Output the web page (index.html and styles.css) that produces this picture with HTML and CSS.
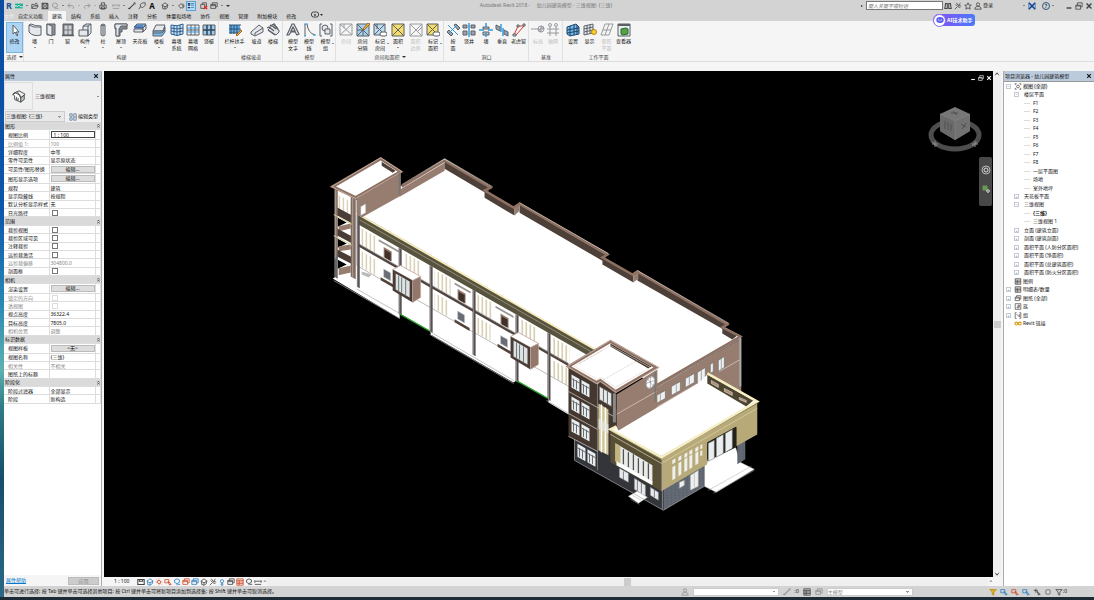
FILE: index.html
```
<!DOCTYPE html>
<html lang="zh-CN">

<head>
	<meta charset="utf-8">
	<meta name="viewport" content="width=device-width, initial-scale=1">
	<title>Autodesk Revit 2018 - 幼儿园建筑模型</title>
	<link rel="stylesheet" href="styles.css">
</head>

<body>
	<svg class="defs" width="0" height="0" aria-hidden="true">
		<!-- small shared glyphs, 10x10 -->
		<symbol id="g-open" viewBox="0 0 10 10"><path d="M1 8V3h3l1 1h3v1M1 8l2-3h6L7 8zM5 2c2-1 3 0 3 1" /></symbol>
		<symbol id="g-save" viewBox="0 0 10 10"><path d="M1.500 1.500h6l1 1v6h-7z" stroke-width="1.400" /><path d="M3 1.500v2.500h4v-2.500M3 8.500v-2.500h4v2.500" /></symbol>
		<symbol id="g-sync" viewBox="0 0 10 10"><path d="M5 1l3 1.500v3L5 7 2 5.500v-3zM5 7v2M6 8h3" /></symbol>
		<symbol id="g-undo" viewBox="0 0 10 10"><path d="M4 2L1 4.500 4 7M1 4.500h6q3 2 0 4" /></symbol>
		<symbol id="g-redo" viewBox="0 0 10 10"><path d="M6 2l3 2.500L6 7M9 4.500H3q-3 2 0 4" /></symbol>
		<symbol id="g-print" viewBox="0 0 10 10"><path d="M3 4V1h4v3M1 4h8v4H1zM3 6h4v3H3z" /></symbol>
		<symbol id="g-measure" viewBox="0 0 10 10"><path d="M1 3v3M9 3v3M1 4h8M1 8h8" /></symbol>
		<symbol id="g-line" viewBox="0 0 10 10"><path d="M1 9l7-7" stroke-width="1.300" /><path d="M0 8h3M7 1h2v2" /></symbol>
		<symbol id="g-tag" viewBox="0 0 10 10"><path d="M1 9l2-3M3 6V3l3-2h3v3L6 7z" /></symbol>
		<symbol id="g-home" viewBox="0 0 10 10"><path d="M1 4l4-3 4 3-4 2zM2 5v3l3 1 3-2V4M5 6v3" /></symbol>
		<symbol id="g-section" viewBox="0 0 10 10"><path d="M5 2l3 3-3 3-3-3zM7 2l2 3-2 3" /></symbol>
		<symbol id="g-views" viewBox="0 0 10 10"><path d="M1 3V1h2M7 1h2v2M9 7v2H7M3 9H1V7" /><circle cx="5" cy="5" r="2" /></symbol>
		<symbol id="g-win" viewBox="0 0 10 10"><path d="M1 3h6v5H1zM3 3V1h6v5H7M1 4.500h6" /></symbol>
		<symbol id="g-people" viewBox="0 0 10 10"><circle cx="5" cy="3" r="2" /><path d="M1 9q0-3 3-3.500h2q3 .5 3 3.500z" /></symbol>
		<symbol id="g-star" viewBox="0 0 10 10"><path d="M5 1l1.200 2.800 3 .2-2.300 2 .8 3L5 7.400 2.300 9l.8-3L.8 4l3-.2z" /></symbol>
		<symbol id="g-find" viewBox="0 0 10 10"><path d="M2 2h2v2h2V2h2l1 6H6V6H4v2H1z" stroke-width="1.300" /></symbol>
		<symbol id="g-key" viewBox="0 0 10 10"><path d="M2 3q3 4 6 4M3 1q1 4 6 4M4 6L1 9M6 4l2-3" /></symbol>
		<symbol id="g-filter" viewBox="0 0 10 10"><path d="M1 2h8L6 5v4L4 8V5z" /></symbol>
		<symbol id="g-cursor" viewBox="0 0 10 10"><path d="M1 2h5v4H1zM5 4l4 4H7v1z" /></symbol>
		<symbol id="g-sun" viewBox="0 0 10 10"><circle cx="5" cy="5" r="2" /><path d="M5 1v1M5 8v1M1 5h1M8 5h1M2 2l1 1M7 7l1 1" /></symbol>
		<symbol id="g-table" viewBox="0 0 10 10"><path d="M1 1h8v8H1zM1 3h8M1 5h8M1 7h8M4 3v6" /></symbol>
		<symbol id="g-restore" viewBox="0 0 10 10"><path d="M1 4h6v5H1zM3 4V1h6v5H7M1 5h6" /></symbol>
		<symbol id="g-close" viewBox="0 0 10 10"><path d="M2 2l6 6M8 2L2 8" stroke-width="1.800" /></symbol>
		<symbol id="g-min" viewBox="0 0 10 10"><path d="M2 7.500h6" stroke-width="1.800" /></symbol>
		<symbol id="g-fold" viewBox="0 0 10 10"><path d="M3 5l2-3 2 3M3 9l2-3 2 3" stroke-width="1.500" /></symbol>
		<symbol id="g-up" viewBox="0 0 10 10"><path d="M2 7l3-4 3 4" stroke-width="1.500" /></symbol>
		<symbol id="g-down" viewBox="0 0 10 10"><path d="M2 3l3 4 3-4" stroke-width="1.500" /></symbol>
	</svg>

	<div class="desktop">
		<div class="app">
			<header class="titlebar">
				<div class="quick">
					<button class="qbtn logo" aria-label="应用程序菜单">R</button>
					<button class="qbtn" aria-label="协作"><svg viewBox="0 0 10 10"><path d="M0 2h10v6H0z" fill="#22b095" stroke="none" /><path d="M1 6V4l2 2 2-2 2 2h3" stroke="#fff" /></svg></button>
					<i class="caret"></i>
					<button class="qbtn" aria-label="打开"><svg><use href="#g-open" /></svg></button>
					<button class="qbtn" aria-label="保存"><svg><use href="#g-save" /></svg></button>
					<button class="qbtn dim" aria-label="同步"><svg><use href="#g-sync" /></svg></button>
					<i class="caret"></i>
					<button class="qbtn dim" aria-label="放弃"><svg><use href="#g-undo" /></svg></button>
					<i class="caret dim"></i>
					<button class="qbtn dim" aria-label="重做"><svg><use href="#g-redo" /></svg></button>
					<i class="caret dim"></i>
					<button class="qbtn" aria-label="打印"><svg><use href="#g-print" /></svg></button>
					<i class="sep"></i>
					<button class="qbtn dim" aria-label="测量"><svg><use href="#g-measure" /></svg></button>
					<i class="caret"></i>
					<button class="qbtn" aria-label="对齐尺寸标注"><svg><use href="#g-line" /></svg></button>
					<button class="qbtn" aria-label="按类别标记"><svg><use href="#g-tag" /></svg></button>
					<button class="qbtn letter" aria-label="文字">A</button>
					<i class="sep"></i>
					<button class="qbtn" aria-label="默认三维视图"><svg><use href="#g-home" /></svg></button>
					<i class="caret"></i>
					<button class="qbtn" aria-label="剖面"><svg><use href="#g-section" /></svg></button>
					<button class="qbtn on" aria-label="细线"><svg viewBox="0 0 10 10"><path d="M1 2h3M1 4h3M1 7h3" stroke="#235" stroke-width="1.500" /><path d="M5 2h4M5 4h4M5 7h4" stroke="#37a" /></svg></button>
					<i class="sep"></i>
					<button class="qbtn" aria-label="关闭隐藏窗口"><svg viewBox="0 0 10 10"><path d="M1 3h5v5H1zM3 3V1h5v4" /><path d="M5 5l4 4M9 5L5 9" stroke="#d22" stroke-width="1.500" /></svg></button>
					<button class="qbtn" aria-label="切换窗口"><svg><use href="#g-win" /></svg></button>
					<i class="caret"></i>
					<i class="caret big"></i>
				</div>
				<div class="title">Autodesk Revit 2018 - &nbsp; &nbsp; 幼儿园建筑模型 - 三维视图: {三维}</div>
				<div class="info">
					<i class="play"></i>
					<input class="search" type="text" aria-label="搜索" placeholder="键入关键字或短语">
					<button class="qbtn" aria-label="查找"><svg><use href="#g-find" /></svg></button>
					<button class="qbtn" aria-label="通讯中心"><svg><use href="#g-key" /></svg></button>
					<button class="qbtn" aria-label="收藏夹"><svg><use href="#g-star" /></svg></button>
					<button class="login"><svg><use href="#g-people" /></svg>登录</button>
					<i class="caret"></i>
					<button class="qbtn" aria-label="Exchange"><svg viewBox="0 0 10 10"><path d="M1 1l8 8M9 1L1 9" stroke="#14418b" stroke-width="2" /><path d="M1 1v8M9 1v8" stroke="#2a76c4" /></svg></button>
					<button class="qbtn help" aria-label="帮助">?</button>
					<i class="caret"></i>
					<button class="qbtn win" aria-label="最小化"><svg><use href="#g-min" /></svg></button>
					<button class="qbtn" aria-label="还原"><svg><use href="#g-restore" /></svg></button>
					<button class="qbtn" aria-label="关闭"><svg><use href="#g-close" /></svg></button>
				</div>
			</header>

			<nav class="tabs">
				<button class="tab file">文件</button>
				<button class="tab">自定义功能</button>
				<button class="tab active">建筑</button>
				<button class="tab">结构</button>
				<button class="tab">系统</button>
				<button class="tab">插入</button>
				<button class="tab">注释</button>
				<button class="tab">分析</button>
				<button class="tab">体量和场地</button>
				<button class="tab">协作</button>
				<button class="tab">视图</button>
				<button class="tab">管理</button>
				<button class="tab">附加模块</button>
				<button class="tab">修改</button>
				<button class="tab mode" aria-label="显示模式"><svg viewBox="0 0 12 8"><rect x=".5" y="1" width="7" height="5" rx="2" /><path d="M3 4h2" stroke-width="1.500" /><path d="M9 3h3l-1.500 2z" fill="#333" stroke="none" /></svg></button>
			</nav>

			<div class="ribbon">
				<section class="panel select">
					<div class="tools">
						<button class="tool m active"><svg viewBox="0 0 14 14"><path d="M5 2v9l2-2 2 4 1-1-2-3h3z" fill="#fff" /></svg><span>修改</span></button>
					</div>
					<h2>选择 <i class="down"></i></h2>
				</section>
				<section class="panel">
					<div class="tools">
						<button class="tool m"><svg viewBox="0 0 14 14"><path d="M1 2q4 3 12 2v8Q5 14 1 9z" class="f" /><path d="M1 2l2-1q4 2 10 2v1" /></svg><span>墙</span><i class="down"></i></button>
						<button class="tool s"><svg viewBox="0 0 14 14"><path d="M3 1h8v11H3z" fill="#8d9299" /><path d="M3 1l5 2v10l-5-2z" class="f" /></svg><span>门</span></button>
						<button class="tool m"><svg viewBox="0 0 14 14"><path d="M2 1h10v11H2z" fill="#777" /><path d="M3.500 2.500h3v4h-3zM7.500 2.500h3v4h-3zM3.500 7.500h3v4h-3zM7.500 7.500h3v4h-3z" fill="#ccd3da" stroke="none" /><path d="M1 12.500h12" stroke-width="1.500" /></svg><span>窗</span></button>
						<button class="tool l"><svg viewBox="0 0 14 14"><path d="M1 7h4V3l3-2h5v9l-3 3H1zM5 7h5v6M5 3h5l3-2M10 3v10" class="f" /></svg><span>构件</span><i class="down"></i></button>
						<button class="tool l"><svg viewBox="0 0 14 14"><path d="M5 2q2-2 4 0v10q-2 2-4 0z" class="f" /><path d="M5 2q2 1 4 0M7 3v9" /></svg><span>柱</span><i class="down"></i></button>
						<button class="tool l"><svg viewBox="0 0 14 14"><path d="M1 1h12v5H8v3H6v4H2V6H1z" fill="#83888f" /><path d="M1 1h12v2H7L5 6v7H2V5H1z" class="f" /></svg><span>屋顶</span><i class="down"></i></button>
						<button class="tool xl"><svg viewBox="0 0 14 14"><path d="M1 4l3-3h9l-3 4z" class="b" /><path d="M1 6h9v3H1zM10 5l3-3v4l-3 3z" class="f" /><path d="M1 5h9M2 3h8" stroke="#35a" /></svg><span>天花板</span></button>
						<button class="tool l"><svg viewBox="0 0 14 14"><path d="M1 8l3-6h9l-2 6z" class="f" /><path d="M1 8h10l2-4v5l-3 4H1z" class="b" /><path d="M1 10h9l3-3" /></svg><span>楼板</span><i class="down"></i></button>
						<button class="tool m"><svg viewBox="0 0 14 14"><path d="M1 2q6 2 12-1v10q-6 3-12 0z" fill="#c9e2f5" stroke="#2b5c8c" /><path d="M4 3v9M7 3v10M10 2v10M1 5q6 2 12 0M1 8q6 2 12 0" stroke="#2b5c8c" /></svg><span>幕墙<br>系统</span></button>
						<button class="tool s"><svg viewBox="0 0 14 14"><path d="M1 2h12v10H1zM5 2v10M9 2v10M1 7h12" fill="#eef4f9" /><path d="M1 5h12M1 9h12" stroke="#39d" /></svg><span>幕墙<br>网格</span></button>
						<button class="tool s"><svg viewBox="0 0 14 14"><path d="M1 2h12v10H1z" fill="#9cc9ec" /><path d="M5 2v10M9 2v10M1 7h12" stroke="#345" stroke-width="1.500" /></svg><span>竖梃</span></button>
					</div>
					<h2>构建</h2>
				</section>
				<section class="panel">
					<div class="tools">
						<button class="tool xxl"><svg viewBox="0 0 14 14"><path d="M1 2h11v8H1z" fill="#5fa9df" stroke="none" /><path d="M1 2h12M1 6h12M1 10h9M3 2v9M6 2v9M9 2v9" stroke="#357" /><path d="M8 12l5-5 1 1-5 5z" fill="#ecb83a" stroke="#a62" /></svg><span>栏杆扶手</span><i class="down"></i></button>
						<button class="tool m"><svg viewBox="0 0 14 14"><path d="M1 9l8-7 4 3v4l-8 4-4-2z" class="f" /><path d="M5 12v-2l8-5" /></svg><span>坡道</span></button>
						<button class="tool s"><svg viewBox="0 0 14 14"><path d="M2 7l8 5 3-3V7l-2-1V4L9 3V1L7 1z" class="f" /><path d="M1 5l2-1 5 4M4 3l1-1 5 4M2 7l7 5M7 1l5 5" stroke-width="1.300" /></svg><span>楼梯</span></button>
					</div>
					<h2>楼梯坡道</h2>
				</section>
				<section class="panel">
					<div class="tools">
						<button class="tool s"><svg viewBox="0 0 14 14"><path d="M1 12L6 1h2l5 10-2 1-2-3H5l-2 3zM7 4L5 8h4z" class="f" stroke-width="1.200" /></svg><span>模型<br>文字</span></button>
						<button class="tool s"><svg viewBox="0 0 14 14"><path d="M3 1v12M5 1q1 9 8 11" /><path d="M2 1h2M2 13h2M4 1h2M11 12h3" stroke="#39d" /></svg><span>模型<br>线</span></button>
						<button class="tool m"><svg viewBox="0 0 14 14"><path d="M3 1H1v12h2M11 1h2v12h-2" /><circle cx="6" cy="5" r="3" class="f" /><path d="M6 6h5v5H6z" class="f" /></svg><span>模型<br>组</span><i class="side"></i></button>
					</div>
					<h2>模型</h2>
				</section>
				<section class="panel">
					<div class="tools">
						<button class="tool s off"><svg viewBox="0 0 14 14"><path d="M1 1h12v11H1zM1 1l12 11M13 1L1 12M5 1v4" /></svg><span>房间</span></button>
						<button class="tool m"><svg viewBox="0 0 14 14"><path d="M1 1h12v12H1z" fill="#a5d1ee" /><path d="M1 1l12 12M13 1L1 13M1 7h6v6" /><path d="M7 6l5-6 2 1-6 6z" fill="#ecb83a" stroke="#a62" /></svg><span>房间<br>分隔</span></button>
						<button class="tool l"><svg viewBox="0 0 14 14"><path d="M1 1h11v11H1z" fill="#bcdcef" /><path d="M1 1l11 11M12 1L1 12M4 1v5" /><rect x="7" y="9" width="7" height="4" rx="2" fill="#fff" /></svg><span>标记<br>房间</span><i class="side"></i></button>
						<button class="tool l"><svg viewBox="0 0 14 14"><path d="M1 1h12v12H1z" fill="#f4dd6b" /><path d="M1 1l12 12M13 1L1 13" /></svg><span>面积</span><i class="down"></i></button>
						<button class="tool m off"><svg viewBox="0 0 14 14"><path d="M1 1h12v12H1zM1 1l12 12M13 1L1 13M8 9l5-5" /></svg><span>面积<br>边界</span></button>
						<button class="tool l"><svg viewBox="0 0 14 14"><path d="M1 1h11v11H1z" fill="#f4dd6b" /><path d="M1 1l11 11M12 1L1 12" /><rect x="7" y="9" width="7" height="4" rx="2" fill="#fff" /></svg><span>标记<br>面积</span><i class="side"></i></button>
					</div>
					<h2>房间和面积 <i class="down"></i></h2>
				</section>
				<section class="panel">
					<div class="tools">
						<button class="tool xs"><svg viewBox="0 0 14 14"><path d="M8 2l2-1 4 4-2 2zM1 9l2-2 4 4-2 2z" fill="#9aa4ae" /><path d="M2 2l10 10M11 2L3 10" stroke="#39d" /></svg><span>按<br>面</span></button>
						<button class="tool l"><svg viewBox="0 0 14 14"><path d="M1 2h4v3H1zM9 2h4v3H9zM1 8h4v4H1zM9 8h4v4H9z" fill="#9aa4ae" /><path d="M7 0v14" stroke="#39d" stroke-width="1.500" /></svg><span>竖井</span></button>
						<button class="tool s"><svg viewBox="0 0 14 14"><path d="M4 4h6v2H4zM4 9h6v3H4z" fill="#b8c0c8" /><path d="M7 0v4M0 7h5M9 7h5M7 10v4" stroke="#39d" stroke-width="1.500" /></svg><span>墙</span></button>
						<button class="tool s"><svg viewBox="0 0 14 14"><path d="M1 2l4 2v4L1 6zM9 7l4 2v4l-4-2z" fill="#9aa4ae" /><path d="M6 1v8M8 5v8" stroke="#39d" stroke-width="1.500" /></svg><span>垂直</span></button>
						<button class="tool m"><svg viewBox="0 0 14 14"><path d="M2 12L6 3h6L4 12" stroke="#d33" /><path d="M1 11h3v2H1zM5 2h2v2H5zM11 1h2v2h-2z" fill="#ddd" /></svg><span>老虎窗</span></button>
					</div>
					<h2>洞口</h2>
				</section>
				<section class="panel">
					<div class="tools">
						<button class="tool xs off"><svg viewBox="0 0 14 14"><path d="M0 6h8" /><circle cx="10" cy="6" r="3" /><path d="M10 6V3a3 3 0 0 1 3 3zM10 6v3a3 3 0 0 1-3-3z" fill="#999" /></svg><span>标高</span></button>
						<button class="tool s off"><svg viewBox="0 0 14 14"><path d="M4 3v10M10 3v10M1 6h12M1 10h12" /><circle cx="4" cy="2" r="1.500" /><circle cx="10" cy="2" r="1.500" /></svg><span>轴网</span></button>
					</div>
					<h2>基准</h2>
				</section>
				<section class="panel">
					<div class="tools">
						<button class="tool s"><svg viewBox="0 0 14 14"><path d="M1 4l9-3 3 3v7l-9 2-3-2z" fill="#73b9ea" stroke="#246" /><path d="M4 3v10M8 2v10M11 2v9M1 7l12-2M1 10l12-2" stroke="#246" /></svg><span>设置</span></button>
						<button class="tool m"><svg viewBox="0 0 14 14"><path d="M1 3l9-2v9l-9 2zM4 2v9M7 2v8M1 6l9-2M1 9l9-2" fill="#e7edf2" /><circle cx="11" cy="9" r="2.500" fill="#f7cf3b" stroke="#b80" /></svg><span>显示</span></button>
						<button class="tool m off"><svg viewBox="0 0 14 14"><path d="M5 1h8L9 12H1zM9 1L5 12M3 7h8" /></svg><span>参照<br>平面</span></button>
						<button class="tool m"><svg viewBox="0 0 14 14"><path d="M1 1h12v12H1z" fill="#eee" /><path d="M1 2h12" stroke-width="2" /><path d="M4 6l5-1 2 1v5l-5 1-2-1z" fill="#56a33e" stroke="#264" /></svg><span>查看器</span></button>
					</div>
					<h2>工作平面</h2>
				</section>
			</div>
			<div class="optionsbar"></div>

			<main class="workspace">
				<aside class="props">
					<h3>属性 <button aria-label="关闭"><svg><use href="#g-close" /></svg></button></h3>
					<div class="type">
						<span class="thumb"><svg viewBox="0 0 16 16"><path d="M1 6l7-4 7 4-5 4z" fill="#eceff2" /><path d="M1 6l5-3 4 7v5l-7-3V8z" fill="#fff" /><path d="M10 10l4-3v5l-4 3z" fill="#b9c3cc" /><path d="M1 7l2-3 6 3 1 3M5 9v3l2 1v-3" /></svg></span>
						<span>三维视图</span>
						<i class="down"></i>
					</div>
					<div class="instance">
						<select aria-label="视图实例"><option>三维视图: {三维}</option></select>
						<button><svg viewBox="0 0 10 10"><path d="M1 1h3v3H1zM1 6h3v3H1zM6 1h3v8H6zM6 5h3" stroke="#579" /></svg>编辑类型</button>
					</div>
					<table>
						<colgroup><col class="name"><col class="value"><col></colgroup>
						<tbody>
							<tr class="group"><th colspan="2">图形</th><th><svg><use href="#g-fold" /></svg></th></tr>
							<tr><th><label for="p-scale">视图比例</label></th><td><input id="p-scale" type="text" value="1 : 100"></td><td></td></tr>
							<tr class="off"><th>比例值 1:</th><td>100</td><td></td></tr>
							<tr><th>详细程度</th><td>中等</td><td></td></tr>
							<tr><th>零件可见性</th><td>显示原状态</td><td></td></tr>
							<tr><th>可见性/图形替换</th><td><button>编辑...</button></td><td></td></tr>
							<tr><th>图形显示选项</th><td><button>编辑...</button></td><td></td></tr>
							<tr><th>规程</th><td>建筑</td><td></td></tr>
							<tr><th>显示隐藏线</th><td>按规程</td><td></td></tr>
							<tr><th>默认分析显示样式</th><td>无</td><td></td></tr>
							<tr><th><label for="p-sun">日光路径</label></th><td><input id="p-sun" type="checkbox"></td><td></td></tr>
							<tr class="group"><th colspan="2">范围</th><th><svg><use href="#g-fold" /></svg></th></tr>
							<tr><th><label for="p-crop">裁剪视图</label></th><td><input id="p-crop" type="checkbox"></td><td></td></tr>
							<tr><th><label for="p-cropv">裁剪区域可见</label></th><td><input id="p-cropv" type="checkbox"></td><td></td></tr>
							<tr><th><label for="p-anno">注释裁剪</label></th><td><input id="p-anno" type="checkbox"></td><td></td></tr>
							<tr><th><label for="p-far">远剪裁激活</label></th><td><input id="p-far" type="checkbox"></td><td></td></tr>
							<tr class="off"><th>远剪裁偏移</th><td>304800.0</td><td></td></tr>
							<tr><th><label for="p-box">剖面框</label></th><td><input id="p-box" type="checkbox"></td><td></td></tr>
							<tr class="group"><th colspan="2">相机</th><th><svg><use href="#g-fold" /></svg></th></tr>
							<tr><th>渲染设置</th><td><button>编辑...</button></td><td></td></tr>
							<tr class="off"><th><label for="p-lock">锁定的方向</label></th><td><input id="p-lock" type="checkbox" disabled></td><td></td></tr>
							<tr class="off"><th><label for="p-persp">透视图</label></th><td><input id="p-persp" type="checkbox" disabled></td><td></td></tr>
							<tr><th>视点高度</th><td>36322.4</td><td></td></tr>
							<tr><th>目标高度</th><td>7805.0</td><td></td></tr>
							<tr class="off"><th>相机位置</th><td>调整</td><td></td></tr>
							<tr class="group"><th colspan="2">标识数据</th><th><svg><use href="#g-fold" /></svg></th></tr>
							<tr><th>视图样板</th><td><button>&lt;无&gt;</button></td><td></td></tr>
							<tr><th>视图名称</th><td>{三维}</td><td></td></tr>
							<tr class="off"><th>相关性</th><td>不相关</td><td></td></tr>
							<tr><th>图纸上的标题</th><td></td><td></td></tr>
							<tr class="group"><th colspan="2">阶段化</th><th><svg><use href="#g-fold" /></svg></th></tr>
							<tr><th>阶段过滤器</th><td>全部显示</td><td></td></tr>
							<tr><th>阶段</th><td>新构造</td><td></td></tr>
						</tbody>
					</table>
					<footer><a href="#">属性帮助</a><button disabled>应用</button></footer>
				</aside>

				<div class="view">
					<div class="canvas">
						<svg class="model" viewBox="104 72 890 505" role="img" aria-label="幼儿园建筑模型三维视图">
							<defs>
								<pattern id="louver" width="4" height="20" patternUnits="userSpaceOnUse"><path d="M0 0h4v20H0z" fill="#fff" /><path d="M1 0h1.500v20H1z" fill="#d8cfb2" /></pattern>
								<pattern id="brick" width="4" height="3" patternUnits="userSpaceOnUse"><path d="M0 0h4v3H0z" fill="#5d636d" /><path d="M0 3h4M2 0v3" stroke="#747b87" stroke-width=".5" /></pattern>
								<g id="ac"><path d="M0 0h8v10H0z" fill="#94796b" /><path d="M1 2h6v8H1z" fill="#3f3029" /><path d="M0 22h7v8H0z" fill="#686d75" stroke="#ccc" stroke-width=".5" /><path d="M-3 32h15v3H-3z" fill="#51423a" /></g>
								<g id="bay">
									<path d="M393 270l8-4 20 11-8 4z" fill="#fff" stroke="#c9b3a8" />
									<path d="M393 270l20 11v22l-20-12z" fill="#4a3c36" />
									<path d="M396 274l14 8v16l-14-8z" fill="#dfe2e2" />
									<path d="M399 276v16M402 278v15M406 280v16" stroke="#697777" />
									<path d="M413 281l8-4v21l-8 5z" fill="#93776a" stroke="#c9b3a8" stroke-width=".5" />
								</g>
								<g id="pair"><path d="M0 0h8v13H0zM10 0h8v13h-8z" fill="#e9eef0" /><path d="M2 3v9M5 3v9M12 3v9M15 3v9M0 4h8M10 4h8" stroke="#63686d" /></g>
							</defs>

							<!-- front facade and steps -->
							<path d="M333 279L400 319V314L431 332V335L514 383L517 381L549 399V403L569 415H600V350L357 213V266z" fill="#fff" />
							<path d="M334 281l66 38M337 278l63 36M430 332l84 49M430 335l84 49M547 401l22 13" stroke="#aaa" stroke-width=".7" fill="none" />

							<g transform="matrix(1 .57 0 1 357 213)">
								<path d="M4 13h15v17H4zM4 36h15v16H4zM47 13h16v17H47zM78 13h16v17H78zM78 36h14v16H78zM120 13h16v17h-16zM120 36h14v16h-14zM163 13h17v17h-17zM195 13h18v17h-18zM195 36h18v17h-18z" fill="url(#louver)" />
								<path d="M22 14h20v2H22zM98 14h16v2H98zM139 14h18v2h-18z" fill="#99948f" />
								<path d="M0 0h240v11H0z" fill="#57533f" />
								<path d="M0 5.500h240" stroke="#aaa68c" stroke-width=".6" />
								<path d="M0 0h240v2H0z" fill="#fbefb6" />
								<path d="M0 30h212v3H0z" fill="#51443f" />
								<path d="M0 30h212M0 53h36M60 53h90M176 53h36" stroke="#aaa" stroke-width=".7" fill="none" />
								<path d="M0 2h3v72H0zM42 11h3v66h-3zM73 11h3v66h-3zM116 11h3v65h-3zM159 11h3v67h-3zM191 11h3v67h-3z" fill="#514a4b" />
								<path d="M1 2v72M43 11v66M74 11v66M117 11v65M160 11v67M192 11v67" stroke="#a7a1a1" stroke-width=".6" />
								<path d="M43 77h30M160 77h31" stroke="#24a324" stroke-width="1.500" />
								<use href="#ac" x="27" y="19" />
								<use href="#ac" x="101" y="19" />
								<use href="#ac" x="144" y="19" />
							</g>
							<path d="M362 272l10 3-3 3-7-3z" fill="#bbb" />
							<use href="#bay" />
							<use href="#bay" x="118" y="67" />

							<!-- main roof with stepped parapet -->
							<path d="M402 186l43-27 47 28-7 4 29 17 6-5 89 51-6 3 31 18 4-4 91 53-5 3 19 10-86 50-60-37-240-137z" fill="#fff" />
							<path d="M400 190l45-27v8l-45 26z" fill="#967d70" />
							<path d="M445 161l44 26v8l-44-26zM485 191l30 17v8l-30-18zM520 205l86 50v8l-86-50zM603 257l31 18v8l-31-18zM638 273l88 51v7l-88-50zM723 327l15 9-5 4-10-6z" fill="#4c4038" />
							<path d="M515 207l5-4v8l-5 5zM634 274l5-3v8l-5 4z" fill="#967d70" />
							<path d="M402 187l43-26 46 27-6 3 29 17 6-4 88 51-5 3 30 17 5-3 90 53-5 3 18 9-84 49" fill="none" stroke="#8e7162" stroke-width="2.500" />
							<path d="M402 185l43-26 48 28M520 203l89 51M638 271l92 53" fill="none" stroke="#e1d1c8" stroke-width=".6" />

							<!-- left stair tower -->
							<path d="M357 198l44-25v23l-39 22-5-3z" fill="#967d70" />
							<path d="M361 207l5-3v9l-5 3z" fill="#fff" stroke="#999" stroke-width=".4" />
							<g transform="matrix(1 .53 0 1 334 188)">
								<path d="M1 0h22v91H1z" fill="#fff" />
								<path d="M4 28h9L4 37zM4 49h9L4 58zM4 70h9L4 79z" fill="#000" />
								<path d="M17 27v5L5 41v-5zM17 48v5L5 61v-5zM17 69v7L5 85v-7z" fill="#967d70" />
								<path d="M4 5h15v15H4z" fill="url(#louver)" />
								<path d="M3 18h15v8H3zM3 39h15v7H3zM3 60h15v7H3z" fill="#493d36" />
								<path d="M1 0h3v70H1zM17 0h5v80h-5z" fill="#806b60" />
								<path d="M1 65h3v24H1z" fill="#666" />
								<path d="M2 0v70M19 0v80" stroke="#c9bcb4" stroke-width=".6" />
								<path d="M0 27h18M0 48h18" stroke="#d8cf9c" />
							</g>
							<path d="M333 187l48-28 20 13-45 26z" fill="#fff" stroke="#8e7162" stroke-width="3" />
							<path d="M382 162l14 9-3 2-11-7z" fill="#4c4038" />
							<path d="M332 187l49-29 21 14-46 27z" fill="none" stroke="#e1d1c8" stroke-width=".6" />
							<path d="M400 173v22" stroke="#777" stroke-width="2" />

							<!-- right wing wall -->
							<path d="M617 410l40-22 85-49v53l-34-12-90 52z" fill="#967d70" />
							<path d="M657 408l45-26M720 372l21-12M657 388l84-49" stroke="#ded3cc" stroke-width=".7" />
							<path d="M741 338v49" stroke="#aaa" stroke-width="2" />
							<path d="M657 396l9-5v8l-9 5zM672 387l9-5v9l-9 5zM686 379l9-5v9l-9 5zM698 373l8-5v15l-8 2zM711 365l3-2v9l-3 2zM719 361l6-4v11l-6 4z" fill="#edf1f1" stroke="#666" stroke-width=".6" />
							<path d="M661 394v8M677 385v8M690 377v8M702 371v12M722 359v11" stroke="#777" stroke-width=".6" />

							<!-- front stair tower -->
							<path d="M617 395l41-25v37l-41 24z" fill="#967d70" />
							<path d="M617 415l40-23" stroke="#e1d1c8" stroke-width=".7" />
							<path d="M575 437l41 17 48 37v20l-89-50z" fill="#34353a" />
							<path d="M569 368l29 17 3-3 16 12v61l-19-3-29-15z" fill="#43372f" />
							<path d="M598 385v86" stroke="#9d9189" stroke-width=".7" />
							<path d="M569 392l29 16 18 10M569 414l29 16M569 437l29 15" stroke="#d9d2cc" stroke-width=".7" fill="none" />
							<g transform="matrix(1 .56 0 1 572 375)">
								<use href="#pair" /><use href="#pair" y="22" /><use href="#pair" y="44" />
								<use href="#pair" x="6" y="66" />
							</g>
							<path d="M599 404l10 6v46l-10-5z" fill="#cfc59b" /><path d="M602 405v48M606 408v46" stroke="#fff" stroke-width="1.500" />
							<path d="M599 419l10 6v9l-10-5z" fill="#e5e7e5" opacity=".7" />
							<path d="M600 387l12 7v13l-12-7z" fill="#e5e9ea" stroke="#555" stroke-width=".5" /><path d="M604 389v13M608 391v14" stroke="#666" />
							<path d="M615 394v29" stroke="#888" stroke-width="3" />
							<path d="M656 372v30" stroke="#777" stroke-width="1.500" />
							<path d="M569 367l42-25 46 26-41 24-15-11-4 2z" fill="#fff" stroke="#8e7162" stroke-width="3" />
							<path d="M611 344l41 23-3 2-38-22z" fill="#43372f" />
							<path d="M568 367l43-26 48 27-42 25-16-11-4 2zM575 367l36-21 40 22-35 20-14-10-4 2z" fill="none" stroke="#e1d1c8" stroke-width=".6" />
							<path d="M580 364l23-13M603 381l35-20" stroke="#bbb" stroke-width=".5" stroke-dasharray="3 1" />
							<ellipse cx="651" cy="383" rx="4" ry="6" transform="rotate(20 651 383)" fill="#fff" stroke="#aaa" />
							<path d="M647 384l8-3M651 377v12M648 379l6 8" stroke="#777" stroke-width=".5" />

							<!-- annex: porch, walls, roof -->
							<path d="M705 462l30-18 6 19 14 7-38 23-12-6z" fill="#fff" stroke="#bbb" stroke-width=".5" />
							<path d="M709 491l43-24M714 494l41-23" stroke="#aaa" stroke-width=".5" />
							<path d="M738 444l8-4v20l-8 5z" fill="url(#brick)" />
							<path d="M664 490l41-24v21l-41 24z" fill="url(#brick)" />
							<path d="M611 430l51 29v33l-51-29z" fill="#575037" />
							<path d="M662 459l96-55v31l-21 12v-19l-29 16v21l-46 27z" fill="#b7a978" />
							<path d="M708 443l29-16v21l-29 14z" fill="#25221a" />
							<path d="M709 444l6-3v18l-6 3zM717 439l7-4v19l-7 4zM726 434l7-4v19l-7 4z" fill="#e9eef0" stroke="#777" stroke-width=".5" />
							<path d="M611 435l51 29 96-55" fill="none" stroke="#ddd5ae" stroke-width=".7" />
							<path d="M616 444l37 22v18l-37-22z" fill="#e9eceb" />
							<path d="M616 444l5 3v18l-5-3z" fill="#c4b581" />
							<path d="M624 450v15M629 453v15M634 455v16M639 459v15M644 462v15M649 464v17" stroke="#50534f" stroke-width="1.300" />
							<path d="M617 462l36 20v4l-36-20z" fill="#fff" />
							<path d="M673 468l3-2v13l-3 2zM679 464l3-2v13l-3 2zM685 460l3-2v13l-3 2zM690 457l3-2v13l-3 2zM696 454l3-2v12l-3 2zM673 461l3-2v4l-3 2zM679 458l3-2v4l-3 2zM685 455l3-2v4l-3 2zM690 452l3-2v4l-3 2zM696 449l3-2v4l-3 2zM701 446l2-1v4l-2 1zM701 452l2-1v5l-2 1z" fill="#eef0ee" />
							<path d="M620 469l9 5v9l-9-5zM635 479l11 7v11l-11-7zM651 488l8 5v8l-8-5z" fill="#e6eaec" stroke="#888" stroke-width=".5" />
							<path d="M624 472v9M638 481v11M642 483v11M655 490v8" stroke="#555" stroke-width=".7" />
							<path d="M680 483l5-2v5l-5 3zM691 476l8-5v16l-8 4zM695 474v14" fill="#eef0ee" stroke="#999" stroke-width=".5" />
							<path d="M629 497l9-5 10 6-9 6z" fill="#fff" stroke="#bbb" stroke-width=".5" />
							<path d="M631 500l9 5M633 496l9 5" stroke="#aaa" stroke-width=".5" />
							<path d="M575 461l89 50 41-24M575 440v21M663 459v51" stroke="#aaa" stroke-width=".7" fill="none" />
							<path d="M611 430l6-3 2 4 81-48 8-8 50 27-96 55z" fill="#fff" />
							<path d="M708 375l46 26-7 6-39-23z" fill="#4c4630" />
							<path d="M712 381l7 4v3l-7-4zM725 389l8 4v3l-8-4zM740 398l7 3v2l-7-3z" fill="#b08d78" stroke="#eee" stroke-width=".5" />
							<path d="M617 427l-6 3 51 28 96-56-50-28" fill="none" stroke="#f7efc4" stroke-width="2.500" />
							<path d="M611 431l51 29 97-57" fill="none" stroke="#b9af85" stroke-width=".6" />
						</svg>

						<div class="mdi">
							<button aria-label="最小化"><svg><use href="#g-min" /></svg></button>
							<button aria-label="还原"><svg><use href="#g-restore" /></svg></button>
							<button aria-label="关闭"><svg><use href="#g-close" /></svg></button>
						</div>
						<svg class="cube" viewBox="0 0 54 48" aria-label="ViewCube">
							<ellipse cx="27" cy="29" rx="24" ry="14" fill="none" stroke="#4d4d4d" stroke-width="5" />
							<path d="M12 8l15-7 15 7v17L27 34 12 25z" fill="#777" />
							<path d="M12 8l15 7v19l-15-9z" fill="#6a6a6a" />
							<path d="M27 15l15-7v17l-15 9z" fill="#727272" />
							<path d="M12 8l15 7 15-7M27 15v19" fill="none" stroke="#858585" stroke-width=".6" />
							<path d="M23 7h7M25 5l4 4M17 15v8M20 16v8M23 18v7M33 18l5 3M34 23l4-6" fill="none" stroke="#505050" />
							<path d="M4 38h6M7 35v6M44 38h6M47 35v6M4 36l5 4M44 40l5-4" stroke="#8a8a8a" fill="none" />
						</svg>
						<div class="navbar">
							<button aria-label="导航盘"><svg viewBox="0 0 10 10"><circle cx="5" cy="5" r="4" stroke="#bbb" /><circle cx="5" cy="5" r="2" stroke="#ddd" /></svg></button>
							<button aria-label="区域缩放"><svg viewBox="0 0 10 10"><path d="M2 2h4v4H2z" fill="#6a9a52" stroke="#6a9a52" /><circle cx="7" cy="7" r="1.300" stroke="#ddd" /></svg></button>
						</div>
					</div>
					<div class="vscroll"><svg><use href="#g-up" /></svg><i></i><svg><use href="#g-down" /></svg></div>
					<div class="viewbar">
						<span class="scale">1 : 100</span>
						<button aria-label="详细程度"><svg viewBox="0 0 10 10"><path d="M1 2h8v6H1zM3 2v2h4V2" stroke-width="1.300" /></svg></button>
						<button class="blue" aria-label="视觉样式"><svg><use href="#g-home" /></svg></button>
						<button class="red" aria-label="关闭日光路径"><svg><use href="#g-sun" /></svg></button>
						<button class="red" aria-label="关闭阴影"><svg><use href="#g-cursor" /></svg></button>
						<button class="blue" aria-label="渲染"><svg><use href="#g-sync" /></svg></button>
						<button class="red" aria-label="裁剪视图"><svg><use href="#g-win" /></svg></button>
						<button class="blue" aria-label="显示裁剪区域"><svg><use href="#g-win" /></svg></button>
						<button aria-label="解锁三维视图"><svg><use href="#g-home" /></svg></button>
						<button aria-label="临时隐藏"><svg><use href="#g-key" /></svg></button>
						<button class="blue" aria-label="显示隐藏图元"><svg viewBox="0 0 10 10"><circle cx="5" cy="4" r="2" /><path d="M4 7h2v2H4z" /></svg></button>
						<button aria-label="临时视图属性"><svg><use href="#g-win" /></svg></button>
						<button class="red" aria-label="分析模型"><svg><use href="#g-table" /></svg></button>
						<button aria-label="位移集"><svg><use href="#g-sync" /></svg></button>
						<button aria-label="约束"><svg><use href="#g-measure" /></svg></button>
						<span>&lt;</span>
						<div class="hscroll"><i></i></div>
						<span>&gt;</span>
					</div>
				</div>

				<aside class="browser">
					<h3>项目浏览器 - 幼儿园建筑模型 <button aria-label="关闭"><svg><use href="#g-close" /></svg></button></h3>
					<ul>
						<li class="top"><i class="box">−</i><svg><use href="#g-views" /></svg><span class="sel">视图 (全部)</span></li>
						<li class="mid"><i class="box">−</i>楼层平面</li>
						<li class="leaf">F1</li>
						<li class="leaf">F2</li>
						<li class="leaf">F3</li>
						<li class="leaf">F4</li>
						<li class="leaf">F5</li>
						<li class="leaf">F6</li>
						<li class="leaf">F7</li>
						<li class="leaf">F8</li>
						<li class="leaf">一层平面图</li>
						<li class="leaf">场地</li>
						<li class="leaf">室外地坪</li>
						<li class="mid"><i class="box">+</i>天花板平面</li>
						<li class="mid"><i class="box">−</i>三维视图</li>
						<li class="leaf"><b>{三维}</b></li>
						<li class="leaf">三维视图 1</li>
						<li class="mid"><i class="box">+</i>立面 (建筑立面)</li>
						<li class="mid"><i class="box">+</i>剖面 (建筑剖面)</li>
						<li class="mid"><i class="box">+</i>面积平面 (人防分区面积)</li>
						<li class="mid"><i class="box">+</i>面积平面 (净面积)</li>
						<li class="mid"><i class="box">+</i>面积平面 (总建筑面积)</li>
						<li class="mid"><i class="box">+</i>面积平面 (防火分区面积)</li>
						<li class="top nobox"><svg><use href="#g-table" /></svg>图例</li>
						<li class="top"><i class="box">+</i><svg><use href="#g-table" /></svg>明细表/数量</li>
						<li class="top"><i class="box">+</i><svg><use href="#g-win" /></svg>图纸 (全部)</li>
						<li class="top"><i class="box">+</i><svg viewBox="0 0 10 10"><path d="M1 1h8v8H1zM3 6h2v2M5 3h2v3H5z" /></svg>族</li>
						<li class="top"><i class="box">+</i><svg viewBox="0 0 10 10"><path d="M3 1H1v8h2M7 1h2v8H7M3 3l4 4V3" /></svg>组</li>
						<li class="top nobox"><svg viewBox="0 0 10 10"><circle cx="2.500" cy="5" r="2" stroke="#d69b13" stroke-width="1.500" /><circle cx="7.500" cy="5" r="2" stroke="#d69b13" stroke-width="1.500" /></svg>Revit 链接</li>
					</ul>
				</aside>
			</main>

			<footer class="status">
				<p>单击可进行选择; 按 Tab 键并单击可选择其他项目; 按 Ctrl 键并单击可将新项目添加到选择集; 按 Shift 键并单击可取消选择。</p>
				<div class="sets">
					<svg class="dim"><use href="#g-people" /></svg>
					<select aria-label="活动工作集"><option></option></select>
					<svg class="dim"><use href="#g-line" /></svg><span>:0</span>
					<svg><use href="#g-table" /></svg>
					<svg class="dim"><use href="#g-win" /></svg>
					<select class="faint" aria-label="设计选项"><option>主模型</option></select>
				</div>
				<div class="picks">
					<button class="gold" aria-label="选择链接"><svg><use href="#g-filter" /></svg></button>
					<button class="blue" aria-label="选择基线图元"><svg><use href="#g-cursor" /></svg></button>
					<button class="red" aria-label="选择锁定图元"><svg><use href="#g-cursor" /></svg></button>
					<button class="blue" aria-label="按面选择图元"><svg><use href="#g-cursor" /></svg></button>
					<button aria-label="选择时拖曳图元"><svg viewBox="0 0 10 10"><path d="M1 3h5M3.500 1v5M5 4l4 4H7v1z" /></svg></button>
					<button class="dim" aria-label="后台进程"><svg viewBox="0 0 10 10"><circle cx="5" cy="5" r="3" stroke-width="1.500" /></svg></button>
					<button class="filter"><svg><use href="#g-filter" /></svg>:0</button>
				</div>
			</footer>

			<button class="assistant"><span><svg viewBox="0 0 12 12"><ellipse cx="6" cy="6" rx="4.500" ry="3.500" fill="#5b5bef" stroke="none" /><path d="M3.500 6.500q1-1.500 2 0M6.500 6.500q1-1.500 2 0" stroke="#fff" /></svg></span>AI技术助手</button>
		</div>
	</div>
	<div class="taskbar"></div>
</body>

</html>
```
FILE: styles.css
```
*, ::before {
	box-sizing: border-box;
}

body {
	color: #111;
	display: flex;
	flex-direction: column;
	font-family: "Noto Sans", "Noto Sans CJK SC", sans-serif;
	font-size: 5px;
	height: 100vh;
	line-height: 7px;
	margin: 0;
	overflow: hidden;
}

button, input, select {
	appearance: none;
	background: none;
	border: 0;
	border-radius: 0;
	color: inherit;
	font: inherit;
	margin: 0;
	padding: 0;
}

svg {
	fill: none;
	flex-shrink: 0;
	height: 8px;
	stroke: #444;
	stroke-width: 1;
	width: 8px;
}

.defs {
	display: none;
}

h2, h3, p, ul {
	font-size: 5px;
	font-weight: normal;
	margin: 0;
	padding: 0;
}

.dim {
	opacity: 0.45;
}

.red svg { stroke: #d2492a; }
.blue svg { stroke: #2b7fc0; }
.gold svg { fill: #e5b41e; stroke: #b98a10; }

.desktop {
	background: linear-gradient(#0a4da0, #0c56ab 35%, #2785b4 50%, #5db1b0 62%, #2f7c86 68%, #14506b 80%, #2b6887);
	display: flex;
	flex: 1;
	min-height: 0;
	padding-left: 4px;
}

.taskbar {
	background: #1c2b36;
	height: 3px;
}

.app {
	background: #f5f5f5;
	display: flex;
	flex: 1;
	flex-direction: column;
	min-width: 0;
	position: relative;
}

/* title bar */

.titlebar {
	align-items: center;
	background: #d3d3d3;
	display: flex;
	height: 11px;
}

.quick, .info {
	align-items: center;
	display: flex;
}

.qbtn {
	align-items: center;
	display: flex;
	height: 10px;
	justify-content: center;
	width: 10px;
}

.logo {
	color: #17539c;
	font-size: 9px;
	font-weight: bold;
}

.letter {
	font-size: 8px;
	font-weight: bold;
}

.on {
	background: #b8dcf5;
	border: 1px solid #5a9fd6;
}

.caret::before, .down::before {
	border: 1px solid transparent;
	border-bottom: 0;
	border-top-color: #333;
	content: "";
	display: block;
	height: 1px;
	margin: 0 auto;
	width: 2px;
}

.caret {
	width: 6px;
}

.caret.big::before, h2 .down::before {
	border-width: 2px 2px 0;
	height: 2px;
	width: 4px;
}

.sep {
	width: 3px;
}

.title {
	color: #777;
	flex: 1;
	text-align: center;
}

.play {
	border: 1px solid transparent;
	border-left: 2px solid #333;
	margin-right: 2px;
}

.search {
	background: #fff;
	border: 1px solid #777;
	font-style: italic;
	height: 9px;
	padding: 0 1px;
	width: 77px;
}

.login {
	align-items: center;
	display: flex;
	gap: 1px;
	margin-right: 28px;
	padding-left: 1px;
}

.help {
	border: 1px solid #357;
	border-radius: 50%;
	color: #246;
	font-weight: bold;
	height: 8px;
	line-height: 6px;
	margin-left: 5px;
	width: 8px;
}

.win {
	margin-left: 8px;
}

/* ribbon */

.tabs {
	background: #d3d3d3;
	display: flex;
	height: 10px;
}

.tab {
	margin-right: 1px;
	padding: 0 4px;
}

.tab.file {
	color: #eee;
	margin: 0;
	padding: 0;
}

.tab.active {
	background: #f5f5f5;
}

.mode {
	padding-left: 10px;
}

.mode svg {
	width: 12px;
}

.ribbon {
	border-bottom: 1px solid #ddd;
	display: flex;
	height: 41px;
}

.panel {
	border-right: 1px solid #e0e0e0;
	display: flex;
	flex-direction: column;
	justify-content: space-between;
	padding: 1px 1px 0 2px;
}

.panel:last-child {
	border-right: 0;
}

.panel h2 {
	color: #444;
	display: flex;
	gap: 2px;
	justify-content: center;
	line-height: 8px;
}

h2 .down {
	align-self: center;
}

.tools {
	display: flex;
}

.tool {
	align-items: center;
	display: flex;
	flex-direction: column;
	height: 31px;
	justify-content: flex-start;
	padding-top: 1px;
	position: relative;
	text-align: center;
	white-space: nowrap;
}

.tool svg {
	height: 14px;
	margin-bottom: 1px;
	stroke: #5b6067;
	width: 14px;
}

.tool .down {
	padding-top: 2px;
}

.tool .side {
	border: 1px solid transparent;
	border-bottom: 0;
	border-top-color: #333;
	bottom: 9px;
	position: absolute;
	right: 0;
}

.xs { width: 14px; }
.s { width: 16px; }
.m { width: 17px; }
.l { width: 18px; }
.xl { width: 20px; }
.xxl { width: 27px; }

.f { fill: #e4e8ec; }
.b { fill: #79bdeb; }

.tool.off {
	color: #999;
	opacity: 0.6;
}

.tool.active {
	background: #add5f3;
	border: 1px solid #79b3e0;
	padding-top: 0;
}

.panel.select {
	padding-right: 0;
}

.optionsbar {
	height: 9px;
}

/* docked panels */

.workspace {
	display: flex;
	flex: 1;
	gap: 2px;
	min-height: 0;
}

h3 {
	align-items: center;
	background: #bccbdc;
	display: flex;
	height: 10px;
	justify-content: space-between;
	padding: 0 1px;
}

h3 button {
	display: flex;
}

h3 svg {
	height: 6px;
	stroke: #111;
	width: 8px;
}

.props {
	background: #fff;
	border-right: 1px solid #aaa;
	display: flex;
	flex-direction: column;
	width: 98px;
}

.type {
	align-items: center;
	background: #f0f0f0;
	display: flex;
	gap: 2px;
	height: 30px;
	padding-right: 2px;
}

.type .down {
	margin-left: auto;
}

.thumb {
	align-items: center;
	border: 1px solid #ddd;
	display: flex;
	height: 28px;
	justify-content: center;
	width: 29px;
}

.thumb svg {
	height: 14px;
	width: 14px;
}

select {
	background-color: #fff;
	background-image: linear-gradient(45deg, transparent 50%, #999 50%), linear-gradient(-45deg, transparent 50%, #999 50%);
	background-position: right 4px center, right 2px center;
	background-repeat: no-repeat;
	background-size: 2px 2px;
	border: 1px solid #ccc;
}

.faint {
	color: #888;
}

.instance {
	background: #f0f0f0;
	display: flex;
	height: 11px;
	justify-content: space-between;
	padding: 0 3px 0 1px;
}

.instance select {
	background-color: #e8e8e8;
	width: 60px;
}

.instance button {
	align-items: center;
	display: flex;
	gap: 1px;
}

table {
	border-collapse: collapse;
	height: 282px;
	table-layout: fixed;
	width: 97px;
}

.name {
	width: 45px;
}

.value {
	width: 46px;
}

th, td {
	border-bottom: 1px solid #ddd;
	border-right: 1px solid #ddd;
	font-weight: normal;
	line-height: 6px;
	padding: 0 0 0 1px;
	text-align: left;
	white-space: nowrap;
}

th {
	padding-left: 4px;
}

.group th {
	background: #dadada;
	border-right: 0;
	padding-left: 1px;
}

.group svg {
	display: block;
	height: 5px;
	width: 5px;
}

tr.off {
	color: #888;
}

td button {
	background: #ddd;
	border: 1px solid #bbb;
	display: block;
	height: 7px;
	line-height: 5px;
	width: 100%;
}

td input[type="text"] {
	border: 1px solid #444;
	display: block;
	height: 7px;
	line-height: 5px;
	padding-left: 2px;
	width: 100%;
}

input[type="checkbox"] {
	background: #fff;
	border: 1px solid #777;
	display: block;
	height: 6px;
	margin-left: 1px;
	width: 6px;
}

input[type="checkbox"]:disabled {
	border-color: #ddd;
}

.props footer {
	align-items: center;
	background: #f5f5f5;
	display: flex;
	height: 11px;
	justify-content: space-between;
	margin-top: auto;
	padding: 1px 2px;
}

.props footer a {
	color: #0878c8;
}

.props footer button {
	background: #ccc;
	border: 1px solid #bbb;
	color: #888;
	line-height: 6px;
	width: 31px;
}

.browser {
	background: #fff;
	border-left: 1px solid #aaa;
	width: 91px;
}

.browser ul {
	border-top: 1px solid #999;
	display: grid;
	grid-auto-rows: 1fr;
	height: 247px;
	list-style: none;
}

.browser li {
	align-items: center;
	display: flex;
	padding-left: 2px;
	white-space: nowrap;
}

.browser .mid {
	padding-left: 10px;
}

.browser .leaf {
	padding-left: 20px;
}

.leaf::before {
	border-top: 1px solid #ddd;
	content: "";
	margin-right: 3px;
	width: 6px;
}

.browser .nobox {
	padding-left: 9px;
}

.browser li svg {
	margin: 0 1px;
	height: 7px;
}

.box {
	border: 1px solid #c5c9d0;
	color: #46a;
	font-size: 4px;
	font-style: normal;
	height: 5px;
	line-height: 3px;
	margin-right: 2px;
	text-align: center;
	width: 5px;
}

.mid .box {
	margin-right: 5px;
}

.sel {
	background: #eee;
}

/* 3D view */

.view {
	display: grid;
	flex: 1;
	grid-template-columns: 1fr 8px;
	grid-template-rows: 1fr 9px;
	min-width: 0;
}

.canvas {
	background: #000;
	min-height: 0;
	overflow: hidden;
	position: relative;
}

.model {
	display: block;
	height: 100%;
	stroke: none;
	width: 100%;
}

.mdi {
	display: flex;
	position: absolute;
	right: 0;
	top: 4px;
}

.mdi svg {
	height: 6px;
	stroke: #fff;
	width: 8px;
}

.mdi button {
	display: flex;
}

.cube {
	height: 48px;
	position: absolute;
	right: 11px;
	stroke: none;
	top: 35px;
	width: 54px;
}

.navbar {
	align-items: center;
	background: #484848;
	border-radius: 2px;
	display: flex;
	flex-direction: column;
	gap: 9px;
	height: 49px;
	padding-top: 8px;
	position: absolute;
	right: 1px;
	top: 86px;
	width: 13px;
}

.navbar button {
	display: flex;
}

.navbar svg {
	height: 10px;
	width: 10px;
}

.vscroll {
	align-items: center;
	background: #efefef;
	display: flex;
	flex-direction: column;
	justify-content: space-between;
}

.vscroll svg {
	height: 6px;
	width: 6px;
}

.vscroll i {
	background: #cdcdcd;
	height: 7px;
	width: 7px;
}

.viewbar {
	align-items: center;
	display: flex;
	gap: 1px;
	grid-column: 1 / 3;
	padding-right: 9px;
}

.viewbar button {
	display: flex;
}

.scale {
	padding: 0 7px 0 10px;
}

.hscroll {
	background: #efefef;
	display: flex;
	flex: 1;
	height: 8px;
	justify-content: center;
}

.hscroll i {
	background: #cdcdcd;
	width: 7px;
}

/* status bar */

.status {
	align-items: center;
	background: #d3d3d3;
	display: flex;
	height: 11px;
	padding-right: 27px;
}

.status p {
	flex: 1;
}

.sets, .picks {
	align-items: center;
	display: flex;
	gap: 3px;
}

.sets {
	gap: 4px;
	margin-right: 76px;
}

.sets select {
	height: 8px;
	line-height: 6px;
	width: 86px;
}

.picks button {
	align-items: center;
	display: flex;
}

.assistant {
	align-items: center;
	background: linear-gradient(90deg, #8a4df2, #4a7af8);
	border-radius: 6px 3px 3px 6px;
	color: #fff;
	display: flex;
	font-weight: bold;
	gap: 1px;
	height: 12px;
	position: absolute;
	right: 119px;
	top: 14px;
	white-space: nowrap;
	width: 42px;
}

.assistant span {
	align-items: center;
	background: #fff;
	border: 1px solid #8a6af5;
	border-radius: 50%;
	display: flex;
	flex-shrink: 0;
	height: 13px;
	justify-content: center;
	width: 13px;
}

.assistant svg {
	height: 10px;
	width: 10px;
}
```
